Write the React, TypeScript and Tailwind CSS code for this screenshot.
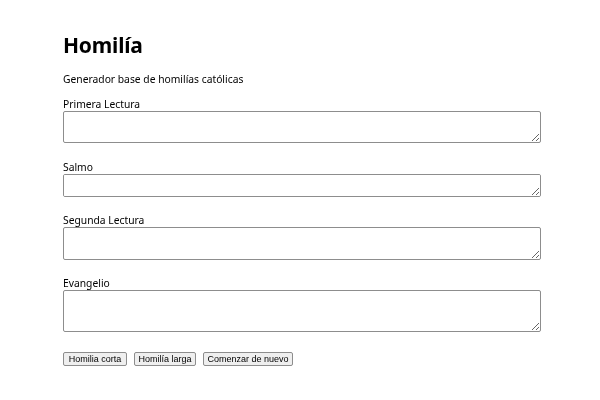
import React from 'react'

const fields = [
  { label: 'Primera Lectura', h: 'h-[32px]', mt: 'mt-0' },
  { label: 'Salmo', h: 'h-[23px]', mt: 'mt-[17px]' },
  { label: 'Segunda Lectura', h: 'h-[33px]', mt: 'mt-[16px]' },
  { label: 'Evangelio', h: 'h-[42px]', mt: 'mt-[16px]' },
]

export default function App() {
  return (
    <main className="min-h-screen bg-white text-black font-['Noto_Sans','Open_Sans',sans-serif]">
      <div className="pl-[63px] pt-[32px] w-[541px]">
        {/* Title */}
        <h1 className="text-[21px] leading-[26px] font-bold tracking-[-0.2px]">Homilía</h1>
        <p className="mt-[14px] text-[10.3px] leading-[14px]">Generador base de homilías católicas</p>

        {/* Readings */}
        <div className="mt-[11px]">
          {fields.map((f) => (
            <div key={f.label} className={f.mt}>
              <label className="block text-[10.3px] leading-[14px]">{f.label}</label>
              <textarea
                className={`block w-full ${f.h} border border-[#8d8d8d] rounded-[2px] bg-white`}
              />
            </div>
          ))}
        </div>

        {/* Actions */}
        <div className="mt-[20px] flex gap-[7px] font-['Liberation_Sans',Arial,sans-serif] text-[9px] leading-[11px]">
          <button className="h-[14px] w-[64px] bg-[#efefef] border border-[#8d8d8d] rounded-[2px]">Homilia corta</button>
          <button className="h-[14px] w-[62px] bg-[#efefef] border border-[#8d8d8d] rounded-[2px]">Homilía larga</button>
          <button className="h-[14px] w-[90px] bg-[#efefef] border border-[#8d8d8d] rounded-[2px]">Comenzar de nuevo</button>
        </div>
      </div>
    </main>
  )
}
